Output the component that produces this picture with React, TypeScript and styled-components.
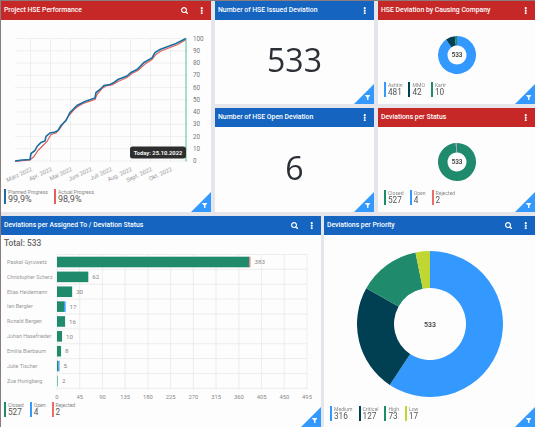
import React from "react";
import styled, { createGlobalStyle } from "styled-components";
import { FaSearch, FaEllipsisV, FaFilter } from "react-icons/fa";

const Global = createGlobalStyle`
  html, body { margin: 0; padding: 0; background: #e4e6ec; }
  body { font-family: Roboto, "Liberation Sans", sans-serif; }
`;

const Page = styled.div`
  box-sizing: border-box;
  width: 535px;
  height: 427px;
  overflow: hidden;
  border-left: 1px solid #8a7c7c;
  border-top: 1px solid #8a7c7c;
  display: grid;
  grid-template-rows: 211px 1fr;
  row-gap: 4px;
  filter: blur(0.3px);
`;
const TopGrid = styled.div`
  display: grid;
  grid-template-columns: 210px 159px 1fr;
  grid-template-rows: 103px 1fr;
  gap: 4px;
`;
const BottomGrid = styled.div`
  display: grid;
  grid-template-columns: 320px 1fr;
  column-gap: 3px;
`;
const Panel = styled.section<{ $tall?: boolean }>`
  position: relative;
  background: #fdfdfd;
  display: flex;
  flex-direction: column;
  overflow: hidden;
  min-width: 0;
  ${(p) => (p.$tall ? "grid-row: span 2;" : "")}
`;
const Header = styled.header<{ $tone: "red" | "blue" }>`
  flex: none;
  height: 18.5px;
  display: flex;
  align-items: center;
  padding: 0 4px 0 3px;
  background: ${(p) => (p.$tone === "red" ? "#c62828" : "#1565c0")};
  color: #fff;
`;
const Title = styled.h2`
  flex: 1;
  margin: 0;
  font-size: 6.85px;
  font-weight: 500;
  white-space: nowrap;
`;
const IconSlot = styled.span`
  display: flex;
  align-items: center;
  justify-content: center;
  width: 13px;
  font-size: 7.5px;
`;
const DotsSlot = styled(IconSlot)`
  font-size: 7.5px;
  width: 11px;
  margin-left: 5px;
`;
const Corner = styled.div`
  position: absolute;
  right: 0;
  bottom: 0;
  width: 20px;
  height: 20px;
  background: #3399ff;
  clip-path: polygon(100% 0, 100% 100%, 0 100%);
  color: #fff;
  font-size: 5.5px;
  display: flex;
  align-items: flex-end;
  justify-content: flex-end;
  padding: 0 4px 4px 0;
  box-sizing: border-box;
`;
const BigNumber = styled.div`
  flex: 1;
  display: flex;
  align-items: center;
  justify-content: center;
  font-family: "Open Sans", sans-serif;
  font-size: 32px;
  color: #2b2f36;
  padding-bottom: 4px;
`;
const Legend = styled.div<{ $pad?: number; $bottom?: number }>`
  flex: none;
  display: flex;
  gap: 6px;
  padding: 0 0 ${(p) => p.$bottom ?? 7}px ${(p) => p.$pad ?? 6}px;
`;
const LegendItem = styled.div<{ $color: string }>`
  border-left: 2px solid ${(p) => p.$color};
  padding-left: 2px;
  height: 15px;
  display: flex;
  flex-direction: column;
  justify-content: space-between;
`;
const LegendLabel = styled.span`
  font-size: 5.1px;
  line-height: 6px;
  color: #888;
  white-space: nowrap;
`;
const LegendValue = styled.span<{ $big?: boolean }>`
  font-size: ${(p) => (p.$big ? 9 : 8.2)}px;
  line-height: 9px;
  color: #555;
  white-space: nowrap;
`;
const DonutArea = styled.div`
  flex: 1;
  min-height: 0;
  display: flex;
  align-items: center;
  justify-content: center;
  padding-top: 8px;
`;
const Total = styled.div`
  flex: none;
  font-size: 8.4px;
  font-weight: 500;
  color: #666;
  padding: 3px 0 0 3px;
  line-height: 11px;
`;
const ChartSvg = styled.svg`
  display: block;
  flex: none;
  font-family: Roboto, "Liberation Sans", sans-serif;
`;

const Head = ({ tone, title, search }: { tone: "red" | "blue"; title: string; search?: boolean }) => (
  <Header $tone={tone}>
    <Title>{title}</Title>
    {search && (
      <IconSlot>
        <FaSearch />
      </IconSlot>
    )}
    <DotsSlot>
      <FaEllipsisV />
    </DotsSlot>
  </Header>
);

const FilterCorner = () => (
  <Corner>
    <FaFilter />
  </Corner>
);

type Entry = { label: string; value: string | number; color: string };
const LegendRow = ({ items, pad, bottom, big }: { items: Entry[]; pad?: number; bottom?: number; big?: boolean }) => (
  <Legend $pad={pad} $bottom={bottom}>
    {items.map((i) => (
      <LegendItem key={i.label} $color={i.color}>
        <LegendLabel>{i.label}</LegendLabel>
        <LegendValue $big={big}>{i.value}</LegendValue>
      </LegendItem>
    ))}
  </Legend>
);

const Donut = ({ items, r, hole, fs }: { items: Entry[]; r: number; hole: number; fs: number }) => {
  const total = items.reduce((s, i) => s + Number(i.value), 0);
  let acc = 0;
  const pt = (a: number, rad: number) => [rad * Math.sin(a * 2 * Math.PI), -rad * Math.cos(a * 2 * Math.PI)];
  return (
    <svg width={r * 2} height={r * 2} viewBox={`${-r} ${-r} ${r * 2} ${r * 2}`}>
      {items.map((i) => {
        const a0 = acc / total;
        acc += Number(i.value);
        const a1 = acc / total;
        const [x0, y0] = pt(a0, r);
        const [x1, y1] = pt(a1, r);
        const [x2, y2] = pt(a1, hole);
        const [x3, y3] = pt(a0, hole);
        const large = a1 - a0 > 0.5 ? 1 : 0;
        return (
          <path
            key={i.label}
            fill={i.color}
            d={`M${x0} ${y0}A${r} ${r} 0 ${large} 1 ${x1} ${y1}L${x2} ${y2}A${hole} ${hole} 0 ${large} 0 ${x3} ${y3}Z`}
          />
        );
      })}
      <text x="0" y={fs * 0.36} textAnchor="middle" fontSize={fs} fontWeight="500" fill="#333" fontFamily="Roboto, sans-serif">
        533
      </text>
    </svg>
  );
};

const BLUE = "#3399ff";
const DARK = "#013f52";
const GREEN = "#1f8a6c";
const RED = "#ee6c68";
const LIME = "#c0d732";

const planned =
  "M15 160.5L22 159.5L30 159L31 153L35 150L37 146L41 142L45 140.5L46 136L50 132.5L55 131.5L58 130L61 125L66 120L70 112L73 109L77 105L80 103.5L85 101L95 97.5L96 92L100 89L104 85L110 84L114 82L118 79L127 75.5L131 72L137 69L144 62L152 57.5L155 52L160 49L168 46L176 43L186 38";
const actual =
  "M15 161L30 159.5L34 156L38 150L43 145L47 141L51 134L56 132.5L60 128L64 122L69 115L74 109L78 106L83 103L95 99L97 94L102 88L106 85.5L112 84.5L118 81L127 77L132 73L138 70L145 63.5L152 59L156 54L161 50.5L170 47L178 44L186 39";

const months = ["März 2022", "Apr. 2022", "Mai 2022", "Juni 2022", "Juli 2022", "Aug. 2022", "Sept. 2022", "Okt. 2022"];

const LineChart = () => (
  <ChartSvg width="210" height="169.5" viewBox="0 0 210 169.5">
    <g transform="translate(-1,-19.5)">
      {Array.from({ length: 11 }, (_, i) => {
        const y = 160.5 - i * 12.25;
        return (
          <g key={i}>
            <line x1="15" x2="188" y1={y} y2={y} stroke="#eaeaea" strokeWidth="0.7" />
            <text x="193" y={y + 2.2} fontSize="6.3" fill="#777">
              {i * 10}
            </text>
          </g>
        );
      })}
      {months.map((m, i) => {
        const x = 30.5 + i * 20;
        return (
          <g key={m}>
            <line x1={x} x2={x} y1="38" y2="162" stroke="#e6e6e6" strokeWidth="0.7" />
            <text x={x + 2} y="170" fontSize="5.8" fill="#999" textAnchor="end" transform={`rotate(-25 ${x + 2} 170)`}>
              {m}
            </text>
          </g>
        );
      })}
      <path d={actual} fill="none" stroke="#e0605c" strokeWidth="1.2" />
      <path d={planned} fill="none" stroke="#1a6fa0" strokeWidth="1.6" />
      <line x1="186" x2="186" y1="38" y2="161" stroke="#4cc38a" strokeWidth="1" />
      <rect x="130" y="146" width="56" height="12" rx="2.5" fill="#2e2e2e" />
      <text x="158" y="154.2" fontSize="5.8" fontWeight="700" fill="#f4f4f4" textAnchor="middle">
        Today: 25.10.2022
      </text>
    </g>
  </ChartSvg>
);

const people: { name: string; total: number; parts: [number, string][] }[] = [
  { name: "Paskal Gyrowetz", total: 383, parts: [[381, GREEN], [2, RED]] },
  { name: "Christopher  Scherz", total: 62, parts: [[62, GREEN]] },
  { name: "Elias Heidemann", total: 30, parts: [[30, GREEN]] },
  { name: "Ian Bergler", total: 17, parts: [[14, GREEN], [3, BLUE]] },
  { name: "Ronald Bergen", total: 16, parts: [[16, GREEN]] },
  { name: "Johan Hasefrieder", total: 10, parts: [[10, GREEN]] },
  { name: "Emilia Bierbaum", total: 8, parts: [[8, GREEN]] },
  { name: "Julie Tischer", total: 5, parts: [[3, GREEN], [2, BLUE]] },
  { name: "Zoe Honigberg", total: 2, parts: [[2, "#7cc0ab"]] },
];
const scale = 250 / 495;

const BarChart = () => (
  <ChartSvg width="320" height="153" viewBox="0 0 320 153">
    <g transform="translate(-1,-249)">
      {Array.from({ length: 10 }, (_, i) => {
        const y = 254.5 + i * 14.87;
        return <line key={i} x1="57" x2="307" y1={y} y2={y} stroke="#e6e6e6" strokeWidth="0.7" />;
      })}
      {Array.from({ length: 12 }, (_, i) => {
        const x = 57 + i * 45 * scale;
        return (
          <g key={i}>
            <line x1={x} x2={x} y1="254.5" y2="390" stroke="#e6e6e6" strokeWidth="0.7" />
            <text x={x} y="399" fontSize="5.8" fill="#888" textAnchor="middle">
              {i * 45}
            </text>
          </g>
        );
      })}
      {people.map((p, i) => {
        const cy = 262 + i * 14.87;
        let x = 57;
        return (
          <g key={p.name}>
            <text x="7" y={cy + 1.8} fontSize="5.4" fill="#999">
              {p.name}
            </text>
            {p.parts.map(([v, c], j) => {
              const w = v * scale;
              const r = <rect key={j} x={x} y={cy - 5.3} width={w} height="10.6" fill={c} />;
              x += w;
              return r;
            })}
            <text x={x + 4} y={cy + 2.2} fontSize="6.2" fill="#888">
              {p.total}
            </text>
          </g>
        );
      })}
    </g>
  </ChartSvg>
);

export default function App() {
  return (
    <>
      <Global />
      <Page>
        <TopGrid>
          <Panel $tall>
            <Head tone="red" title="Project HSE Performance" search />
            <LineChart />
            <LegendRow
              pad={3}
              big
              items={[
                { label: "Planned Progress", value: "99,9%", color: "#1a6fa0" },
                { label: "Actual Progress", value: "98,9%", color: "#e0605c" },
              ]}
            />
            <FilterCorner />
          </Panel>
          <Panel>
            <Head tone="blue" title="Number of HSE Issued Deviation" />
            <BigNumber>533</BigNumber>
            <FilterCorner />
          </Panel>
          <Panel>
            <Head tone="red" title="HSE Deviation by Causing Company" />
            <DonutArea>
              <Donut
                r={19}
                hole={9.5}
                fs={6.5}
                items={[
                  { label: "Ashtin", value: 481, color: BLUE },
                  { label: "MMO", value: 42, color: DARK },
                  { label: "Kartr", value: 10, color: GREEN },
                ]}
              />
            </DonutArea>
            <LegendRow
              items={[
                { label: "Ashtin", value: 481, color: BLUE },
                { label: "MMO", value: 42, color: DARK },
                { label: "Kartr", value: 10, color: GREEN },
              ]}
            />
            <FilterCorner />
          </Panel>
          <Panel>
            <Head tone="blue" title="Number of HSE Open Deviation" />
            <BigNumber>6</BigNumber>
            <FilterCorner />
          </Panel>
          <Panel>
            <Head tone="red" title="Deviations per Status" />
            <DonutArea>
              <Donut
                r={19}
                hole={9.5}
                fs={6.5}
                items={[
                  { label: "Closed", value: 527, color: GREEN },
                  { label: "Open", value: 4, color: BLUE },
                  { label: "Rejected", value: 2, color: RED },
                ]}
              />
            </DonutArea>
            <LegendRow
              items={[
                { label: "Closed", value: 527, color: GREEN },
                { label: "Open", value: 4, color: BLUE },
                { label: "Rejected", value: 2, color: RED },
              ]}
            />
            <FilterCorner />
          </Panel>
        </TopGrid>
        <BottomGrid>
          <Panel>
            <Head tone="blue" title="Deviations per Assigned To / Deviation Status" search />
            <Total>Total: 533</Total>
            <BarChart />
            <LegendRow
              pad={3}
              bottom={6}
              items={[
                { label: "Closed", value: 527, color: GREEN },
                { label: "Open", value: 4, color: BLUE },
                { label: "Rejected", value: 2, color: RED },
              ]}
            />
            <FilterCorner />
          </Panel>
          <Panel>
            <Head tone="blue" title="Deviations per Priority" search />
            <DonutArea>
              <Donut
                r={73}
                hole={36}
                fs={7}
                items={[
                  { label: "Medium", value: 316, color: BLUE },
                  { label: "Critical", value: 127, color: DARK },
                  { label: "High", value: 73, color: GREEN },
                  { label: "Low", value: 17, color: LIME },
                ]}
              />
            </DonutArea>
            <LegendRow
              bottom={6}
              items={[
                { label: "Medium", value: 316, color: BLUE },
                { label: "Critical", value: 127, color: DARK },
                { label: "High", value: 73, color: GREEN },
                { label: "Low", value: 17, color: LIME },
              ]}
            />
            <FilterCorner />
          </Panel>
        </BottomGrid>
      </Page>
    </>
  );
}
